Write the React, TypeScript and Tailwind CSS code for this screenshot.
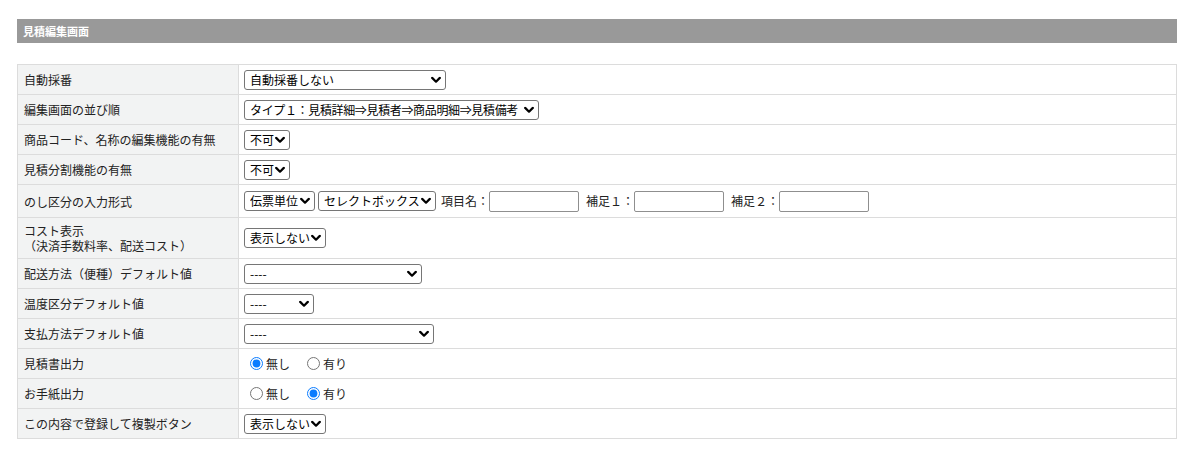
import React from "react";

const font = { fontFamily: '"Noto Sans CJK JP", "Noto Sans", sans-serif' };

function Chevron() {
  return (
    <svg width="10" height="7" viewBox="0 0 10 7" className="pointer-events-none absolute right-[5px] top-1/2 -translate-y-1/2">
      <path d="M1.2 1.4 L5 5.2 L8.8 1.4" fill="none" stroke="#000" strokeWidth="2.2" strokeLinecap="round" strokeLinejoin="round" />
    </svg>
  );
}

function Sel({ w, value, tight }: { w: string; value: string; tight?: boolean }) {
  return (
    <span className={`relative inline-block align-middle ${w}`}>
      <select
        defaultValue={value}
        className={`h-[20px] w-full appearance-none rounded-[3px] border border-[#767676] bg-white pl-[5px] pr-[15px] text-[12px] leading-[18px] text-black outline-none ${tight ? "tracking-[-0.35px]" : ""}`}
        style={font}
      >
        <option>{value}</option>
      </select>
      <Chevron />
    </span>
  );
}

function TextBox() {
  return (
    <input
      type="text"
      className="h-[21px] w-[90px] rounded-[2px] border border-[#8f8f8f] bg-white align-middle text-[12px] outline-none"
    />
  );
}

function Radio({ name, checked, label }: { name: string; checked: boolean; label: string }) {
  return (
    <label className="inline-flex items-center">
      <input type="radio" name={name} defaultChecked={checked} className="m-0 h-[13px] w-[13px] accent-[#0b7cff]" />
      <span className="ml-[3px]">{label}</span>
    </label>
  );
}

function Row({ label, h, children }: { label: React.ReactNode; h: string; children: React.ReactNode }) {
  return (
    <tr className={h}>
      <td className="w-[221px] border border-[#dcdcdc] bg-[#f2f3f3] px-[6px] align-middle leading-[15px]">{label}</td>
      <td className="border border-[#dcdcdc] bg-white px-[5px] align-middle">{children}</td>
    </tr>
  );
}

export default function App() {
  return (
    <div className="min-h-[458px] bg-white px-[17px] pt-[19px] text-[12px] text-[#222]" style={font}>
      <div className="flex h-[24px] w-[1160px] items-center bg-[#999999] pl-[6px] text-[11px] font-bold text-white">
        見積編集画面
      </div>
      <table className="mt-[21px] w-[1160px] border-collapse">
        <tbody>
          <Row label="自動採番" h="h-[30px]">
            <Sel w="w-[202px]" value="自動採番しない" />
          </Row>
          <Row label="編集画面の並び順" h="h-[30px]">
            <Sel w="w-[295px]" value="タイプ１：見積詳細⇒見積者⇒商品明細⇒見積備考" tight />
          </Row>
          <Row label="商品コード、名称の編集機能の有無" h="h-[30px]">
            <Sel w="w-[46px]" value="不可" />
          </Row>
          <Row label="見積分割機能の有無" h="h-[30px]">
            <Sel w="w-[46px]" value="不可" />
          </Row>
          <Row label="のし区分の入力形式" h="h-[33px]">
            <div className="flex items-center">
              <Sel w="w-[71px]" value="伝票単位" />
              <span className="ml-[3px]"><Sel w="w-[118px]" value="セレクトボックス" /></span>
              <span className="ml-[5px]">項目名：</span>
              <TextBox />
              <span className="ml-[7px]">補足１：</span>
              <TextBox />
              <span className="ml-[7px]">補足２：</span>
              <TextBox />
            </div>
          </Row>
          <Row
            label={
              <>
                コスト表示
                <br />
                （決済手数料率、配送コスト）
              </>
            }
            h="h-[41px]"
          >
            <Sel w="w-[82px]" value="表示しない" />
          </Row>
          <Row label="配送方法（便種）デフォルト値" h="h-[30px]">
            <Sel w="w-[178px]" value="----" />
          </Row>
          <Row label="温度区分デフォルト値" h="h-[30px]">
            <Sel w="w-[70px]" value="----" />
          </Row>
          <Row label="支払方法デフォルト値" h="h-[30px]">
            <Sel w="w-[190px]" value="----" />
          </Row>
          <Row label="見積書出力" h="h-[30px]">
            <div className="flex items-center gap-[17px] pl-[6px]">
              <Radio name="r1" checked={true} label="無し" />
              <Radio name="r1" checked={false} label="有り" />
            </div>
          </Row>
          <Row label="お手紙出力" h="h-[30px]">
            <div className="flex items-center gap-[17px] pl-[6px]">
              <Radio name="r2" checked={false} label="無し" />
              <Radio name="r2" checked={true} label="有り" />
            </div>
          </Row>
          <Row label="この内容で登録して複製ボタン" h="h-[30px]">
            <Sel w="w-[82px]" value="表示しない" />
          </Row>
        </tbody>
      </table>
    </div>
  );
}
